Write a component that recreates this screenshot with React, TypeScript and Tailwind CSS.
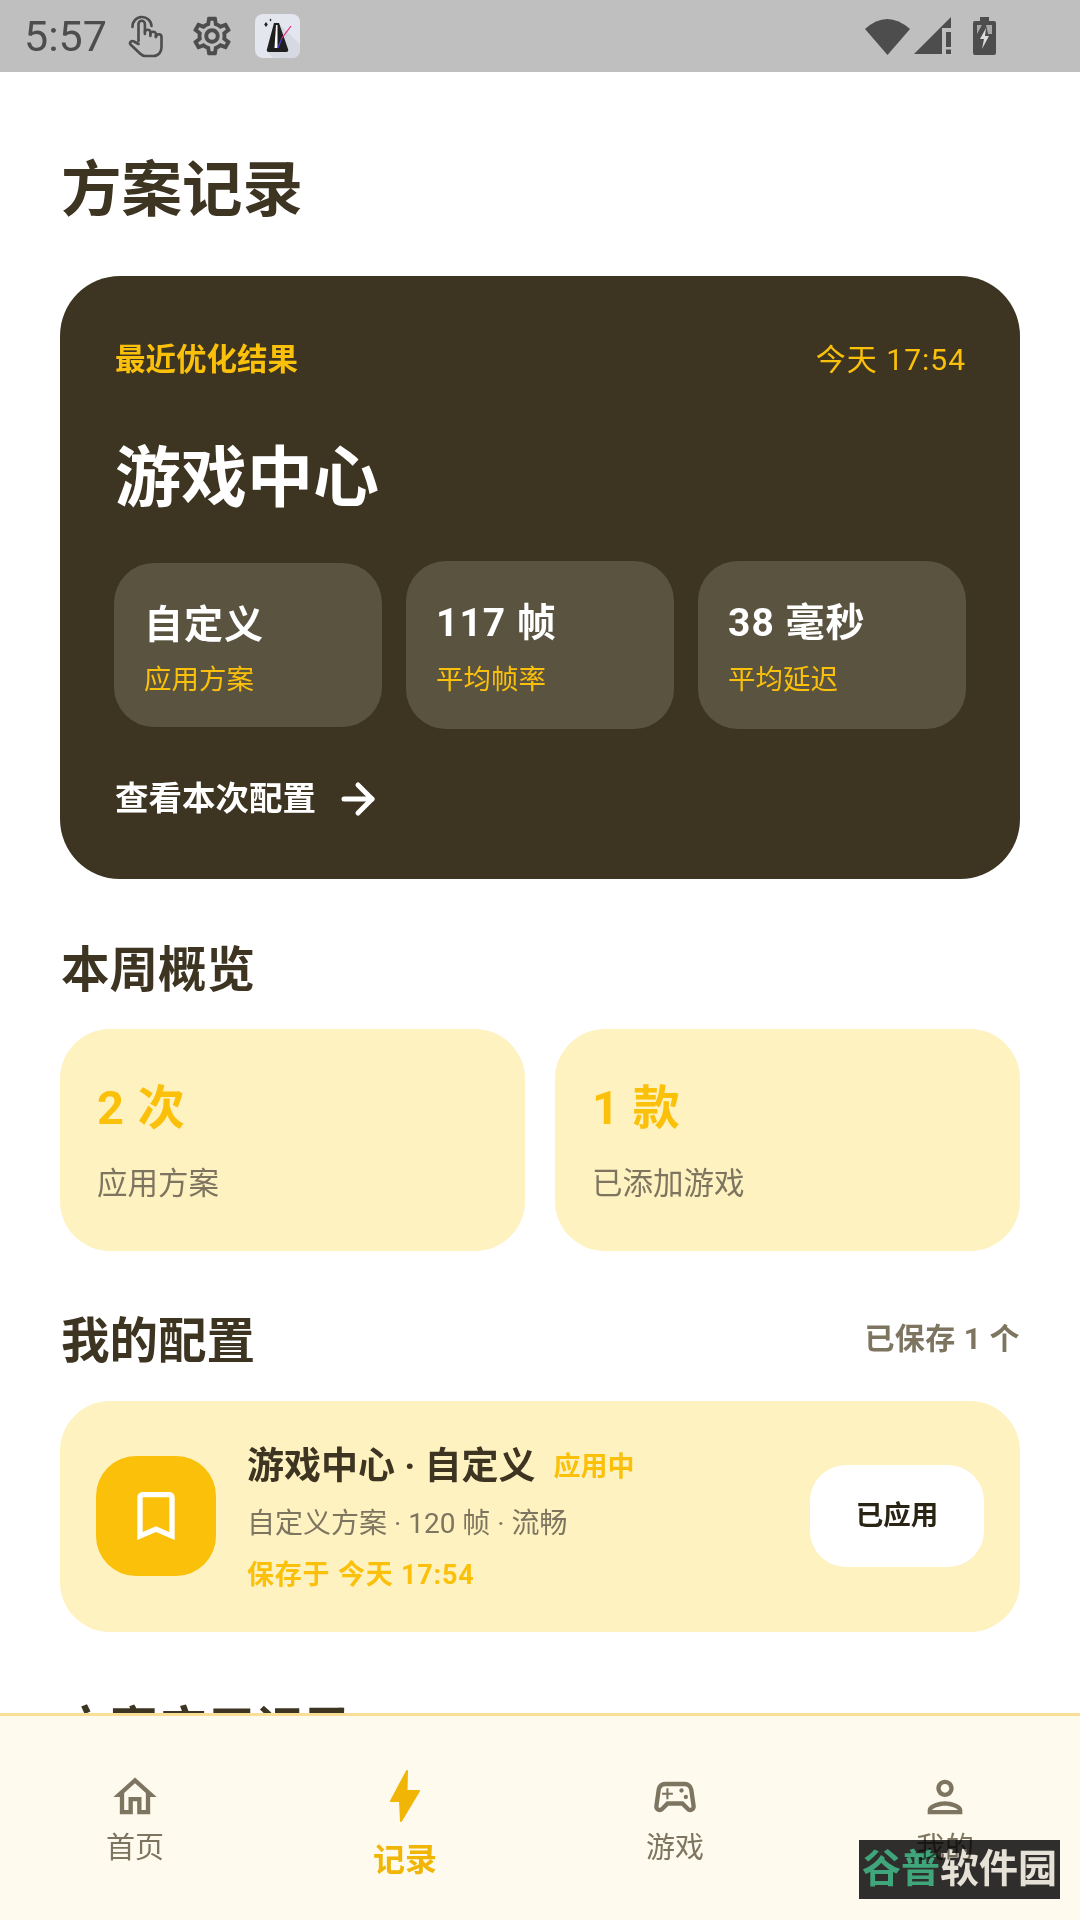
import { ArrowRight } from 'lucide-react';
import {
  MdOutlineBookmarkBorder,
  MdOutlineHome,
  MdOutlinePerson,
  MdOutlineSettings,
  MdOutlineSportsEsports,
} from 'react-icons/md';

const cjk = "font-['Roboto','Noto_Sans_CJK_SC',sans-serif]";

const Metronome = () => (
  <svg width="45" height="44" viewBox="0 0 45 44" className="rounded-lg">
    <rect width="45" height="44" fill="#e4e6ef" />
    <path d="M24 10 L45 30 V44 H18 L12 38Z" fill="#d6d8e2" />
    <path d="M19 9 h5 l9 26 q1 3 -2 3 H14 q-3 0 -2 -3Z" fill="#1f1f1f" />
    <path d="M21 11 h1.500 v23 h-3Z" fill="#fff" />
    <path d="M27 24 L36 12" stroke="#e8267c" strokeWidth="1.200" />
    <path d="M23 34 L27 24" stroke="#4a3fe0" strokeWidth="1.200" />
    <path d="M11 8 l1.800 2.400 L11 13 l-1.800 -2.600Z" fill="#222" />
    <path d="M15.500 4.500 l1 1.500 -1 1.500 -1 -1.500Z" fill="#222" />
  </svg>
);

const TouchHand = () => (
  <svg width="36" height="44" viewBox="0 0 36 44" fill="none" stroke="#4d4d4d" strokeWidth="2.600" strokeLinecap="round" strokeLinejoin="round">
    <path d="M4.500 13 a9.500 9.500 0 0 1 19 -1" />
    <path d="M10.500 27 V10 a3.200 3.200 0 0 1 6.400 0 V20" />
    <path d="M16.900 18 a2.800 2.800 0 0 1 5.500 0 V22" />
    <path d="M22.400 20 a2.800 2.800 0 0 1 5.500 0 V23" />
    <path d="M27.900 23 a2.800 2.800 0 0 1 5.600 0 V33 c0 5 -3 9 -8 9 H17 c-2 0 -3.500 -1 -5 -2.500 L2.500 30.500 c-1.500 -2 1 -4.500 3.500 -3 L10.500 30" />
  </svg>
);

const StatusBar = () => (
  <div className="flex h-[72px] shrink-0 items-center bg-[#bfbfbf] pl-[24px] pr-[84px] text-[#4d4d4d]">
    <span className="w-[83px] font-['Roboto',sans-serif] text-[43px] leading-none">5:57</span>
    <div className="ml-[21px]">
      <TouchHand />
    </div>
    <MdOutlineSettings size={46} className="ml-[25px]" />
    <div className="ml-[20px]">
      <Metronome />
    </div>
    <div className="ml-auto flex items-center gap-[21px]">
      <div className="flex items-center gap-[4px]">
        <svg width="45" height="38" viewBox="0 0 45 38" fill="#4d4d4d">
          <path d="M0 12 Q22 -8 45 12 L22.500 38Z" />
        </svg>
        <svg width="38" height="38" viewBox="0 0 38 38" fill="#4d4d4d">
          <path d="M0 37 L37 0 V11 H28 V37Z" />
          <path d="M32 15 h5 v15 h-5Z M32 32.500 h5 v4.500 h-5Z" />
        </svg>
      </div>
      <svg width="23" height="38" viewBox="0 0 23 38">
        <path d="M7 0 h9 v4 h5 q2 0 2 2 v30 q0 2 -2 2 H2 q-2 0 -2 -2 V6 q0 -2 2 -2 h5Z" fill="#4d4d4d" />
        <path d="M4 8 h5 l-5 9Z M13 8 h6 v9 h-4Z" fill="#a8a8a8" />
        <path d="M13 11 L7 22 h4 l-2 10 L16 19 h-4Z" fill="#dcdcdc" />
      </svg>
    </div>
  </div>
);

const HeroStat = ({ value, label, small }: { value: string; label: string; small?: boolean }) => (
  <div
    className={`flex flex-1 flex-col rounded-[40px] bg-[#5a5340] pl-[30px] pt-[37px] ${
      small ? 'h-[164px]' : 'h-[168px]'
    }`}
  >
    <p className="text-[39px] font-bold leading-[50px] tracking-[1px] text-white">{value}</p>
    <p className={`text-[27.500px] leading-[36px] text-[#fbc00a] ${small ? 'mt-[12px]' : 'mt-[14px]'}`}>{label}</p>
  </div>
);

const WeekCard = ({ value, label }: { value: string; label: string }) => (
  <div className="flex h-[222px] flex-1 flex-col rounded-[50px] bg-[#fef2c0] pl-[37px] pt-[48px]">
    <p className="text-[47px] font-bold leading-[62px] tracking-[1px] text-[#fbc00a]">{value}</p>
    <p className="mt-[25px] text-[30.500px] leading-[40px] text-[#7d7560]">{label}</p>
  </div>
);

const NavItem = ({ icon, label }: { icon: React.ReactNode; label: string }) => (
  <div className="flex w-[270px] flex-col items-center pt-[55px] text-[#7d7560]">
    <div className="flex h-[52px] items-center justify-center">{icon}</div>
    <span className="mt-[6px] text-[29px] leading-[38px]">{label}</span>
  </div>
);

export default function App() {
  return (
    <div className={`relative flex h-[1920px] w-[1080px] flex-col overflow-hidden bg-white ${cjk}`}>
      <StatusBar />

      <main className="min-h-0 flex-1 overflow-hidden px-[60px]">
        <h1 className="mt-[79px] pl-[1px] text-[60.500px] font-bold leading-[80px] text-[#3d3522]">方案记录</h1>

        <section className="mt-[45px] flex h-[603px] flex-col rounded-[60px] bg-[#3d3522] px-[54px] pt-[64px]">
          <div className="flex items-center justify-between text-[30.500px] leading-[40px] text-[#fbc00a]">
            <span className="pl-[1px] font-bold">最近优化结果</span>
            <span className="text-[30px] tracking-[1px]">今天 17:54</span>
          </div>
          <h2 className="mt-[54px] pl-[1px] text-[66px] font-bold leading-[90px] text-white">游戏中心</h2>
          <div className="mt-[37px] flex items-center gap-[24px]">
            <HeroStat value="自定义" label="应用方案" small />
            <HeroStat value="117 帧" label="平均帧率" />
            <HeroStat value="38 毫秒" label="平均延迟" />
          </div>
          <div className="mt-[46px] flex items-center gap-[18px] pl-[1px] text-white">
            <span className="text-[33.500px] font-bold leading-[44px]">查看本次配置</span>
            <ArrowRight size={48} strokeWidth={2.5} />
          </div>
        </section>

        <h2 className="mt-[60px] pl-[1px] text-[48.500px] font-bold leading-[64px] text-[#3d3522]">本周概览</h2>
        <div className="mt-[26px] flex gap-[30px]">
          <WeekCard value="2 次" label="应用方案" />
          <WeekCard value="1 款" label="已添加游戏" />
        </div>

        <div className="mt-[59px] flex items-center justify-between">
          <h2 className="pl-[1px] text-[48.500px] font-bold leading-[64px] text-[#3d3522]">我的配置</h2>
          <span className="mb-[7px] text-[30px] font-bold leading-[40px] tracking-[0.5px] text-[#7d7560]">已保存 1 个</span>
        </div>

        <section className="mt-[27px] flex h-[231px] items-center rounded-[50px] bg-[#fef2c0] px-[36px] pb-[2px]">
          <div className="flex h-[120px] w-[120px] shrink-0 items-center justify-center rounded-[40px] bg-[#fbc00a] text-white">
            <MdOutlineBookmarkBorder size={64} />
          </div>
          <div className="ml-[31px] mt-[4px] flex flex-col">
            <div className="flex items-center gap-[18px]">
              <span className="text-[37px] font-bold leading-[48px] text-[#3d3522]">游戏中心 · 自定义</span>
              <span className="text-[27px] font-bold leading-[38px] text-[#fbc00a]">应用中</span>
            </div>
            <p className="mt-[14px] text-[28px] leading-[38px] text-[#7d7560]">自定义方案 · 120 帧 · 流畅</p>
            <p className="mt-[14px] text-[27px] font-bold leading-[36px] tracking-[0.8px] text-[#fbc00a]">保存于 今天 17:54</p>
          </div>
          <button className="ml-auto flex h-[102px] w-[174px] items-center justify-center rounded-[36px] bg-white text-[27.500px] font-bold text-[#2a2415]">
            已应用
          </button>
        </section>

        <h2 className="mt-[67px] pl-[1px] text-[48.500px] font-bold leading-[64px] text-[#3d3522]">方案应用记录</h2>
      </main>

      <nav className="flex h-[207px] shrink-0 border-t-[3px] border-[#f8df95] bg-[#fffaee]">
        <NavItem icon={<MdOutlineHome size={52} />} label="首页" />
        <div className="flex w-[270px] flex-col items-center pt-[53px] text-[#f0b505]">
          <svg width="36" height="54" viewBox="0 0 36 54" fill="currentColor" stroke="currentColor" strokeWidth="2" strokeLinejoin="round">
            <path d="M20 2 L4 32 H13 L14 52 L32 22 H19.500Z" />
          </svg>
          <span className="mt-[17px] text-[32px] font-bold leading-[40px]">记录</span>
        </div>
        <NavItem icon={<MdOutlineSportsEsports size={52} />} label="游戏" />
        <NavItem icon={<MdOutlinePerson size={52} />} label="我的" />
      </nav>

      <div className="absolute left-[859px] top-[1840px] flex h-[59px] w-[201px] items-center justify-center bg-[#2f2f2f] text-[39px] font-bold leading-none mix-blend-multiply">
        <span className="text-[#3fa883]">谷普</span>
        <span className="text-[#e6e6e6]">软件园</span>
      </div>
    </div>
  );
}
